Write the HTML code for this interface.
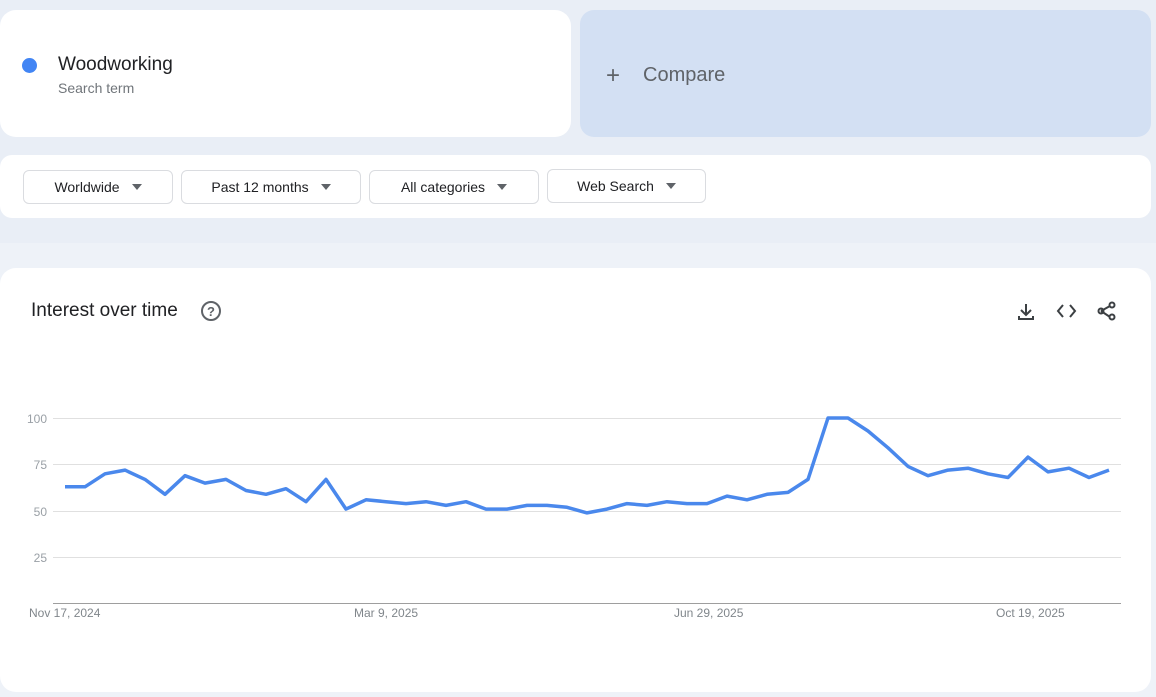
<!DOCTYPE html>
<html><head><meta charset="utf-8"><style>
body{margin:0;width:1156px;height:697px;background:#e9eef6;font-family:"Liberation Sans",sans-serif;position:relative;overflow:hidden}
.card{position:absolute;background:#fff;border-radius:16px}
.pill{position:absolute;top:170px;height:34px;border:1px solid #dadce0;border-radius:6px;background:#fff;font-size:14px;color:#202124;display:flex;align-items:center;justify-content:center;box-sizing:border-box}
.pill:after{content:"";border-left:5px solid transparent;border-right:5px solid transparent;border-top:6px solid #5f6368;margin-left:12px}
</style></head><body>
<div style="position:absolute;left:0;top:243px;width:1156px;height:454px;background:#eef2f8"></div>
<div class="card" style="left:0;top:10px;width:571px;height:127px"></div>
<div style="position:absolute;left:22px;top:58px;width:15px;height:15px;border-radius:50%;background:#4285f4"></div>
<div style="position:absolute;left:58px;top:54px;font-size:19px;color:#202124">Woodworking</div>
<div style="position:absolute;left:58px;top:80px;font-size:14px;color:#70757a">Search term</div>
<div style="position:absolute;left:580px;top:10px;width:571px;height:127px;background:#d3e0f3;border-radius:14px"></div>
<div style="position:absolute;left:606px;top:63px;font-size:24px;color:#5f6368;line-height:26px">+</div>
<div style="position:absolute;left:643px;top:64px;font-size:20px;color:#5f6368">Compare</div>
<div class="card" style="left:0;top:155px;width:1151px;height:63px;border-radius:12px"></div>
<div class="pill" style="left:23px;width:150px">Worldwide</div>
<div class="pill" style="left:181px;width:180px">Past 12 months</div>
<div class="pill" style="left:369px;width:170px">All categories</div>
<div class="pill" style="left:547px;width:159px;top:169px">Web Search</div>
<div class="card" style="left:0;top:268px;width:1151px;height:424px"></div>
<div style="position:absolute;left:31px;top:300px;font-size:19px;color:#202124">Interest over time</div>
<svg style="position:absolute;left:0;top:0" width="1156" height="697">
<circle cx="211" cy="311" r="9" fill="none" stroke="#5f6368" stroke-width="2"/>
<text x="211" y="316" font-size="13" text-anchor="middle" fill="#5f6368" font-family="Liberation Sans" font-weight="bold">?</text>
<g stroke="#3c4043" stroke-width="2" fill="none">
<path d="M1026 304v11M1021 310l5 5 5-5M1019 316v3h14v-3"/>
<path d="M1063 305l-5 6 5 6M1070 305l5 6-5 6"/>
<path d="M1101 311l9-5M1101 311l9 6"/>
</g>
<g fill="none" stroke="#3c4043" stroke-width="2"><circle cx="1112" cy="305" r="2.5"/><circle cx="1101" cy="311" r="2.5"/><circle cx="1112" cy="317" r="2.5"/></g>
<g stroke="#e0e0e0" stroke-width="1"><path d="M53 418.5H1121M53 464.5H1121M53 511.5H1121M53 557.5H1121"/></g>
<path d="M53 603.5H1121" stroke="#9e9e9e"/>
<g font-size="12" fill="#9aa0a6" font-family="Liberation Sans" text-anchor="end"><text x="47" y="423">100</text><text x="47" y="469">75</text><text x="47" y="516">50</text><text x="47" y="562">25</text></g>
<g font-size="12" fill="#80868b" font-family="Liberation Sans"><text x="29" y="617">Nov 17, 2024</text><text x="354" y="617">Mar 9, 2025</text><text x="674" y="617">Jun 29, 2025</text><text x="996" y="617">Oct 19, 2025</text></g>
<polyline fill="none" stroke="#4a88ec" stroke-width="3.5" stroke-linejoin="round" points="65,486.8 85,486.8 105,473.8 125,470.1 145,479.4 165,494.3 185,475.7 205,483.1 226,479.4 246,490.5 266,494.3 286,488.7 306,501.7 326,479.4 346,509.1 366,499.8 386,501.7 406,503.6 426,501.7 446,505.4 466,501.7 486,509.1 507,509.1 527,505.4 547,505.4 567,507.3 587,512.9 607,509.1 627,503.6 647,505.4 667,501.7 687,503.6 707,503.6 727,496.1 747,499.8 767,494.3 788,492.4 808,479.4 828,418 848,418 868,431 888,447.8 908,466.4 928,475.7 948,470.1 968,468.2 988,473.8 1008,477.5 1028,457.1 1048,471.9 1069,468.2 1089,477.5 1109,470.1"/>
</svg>
</body></html>
